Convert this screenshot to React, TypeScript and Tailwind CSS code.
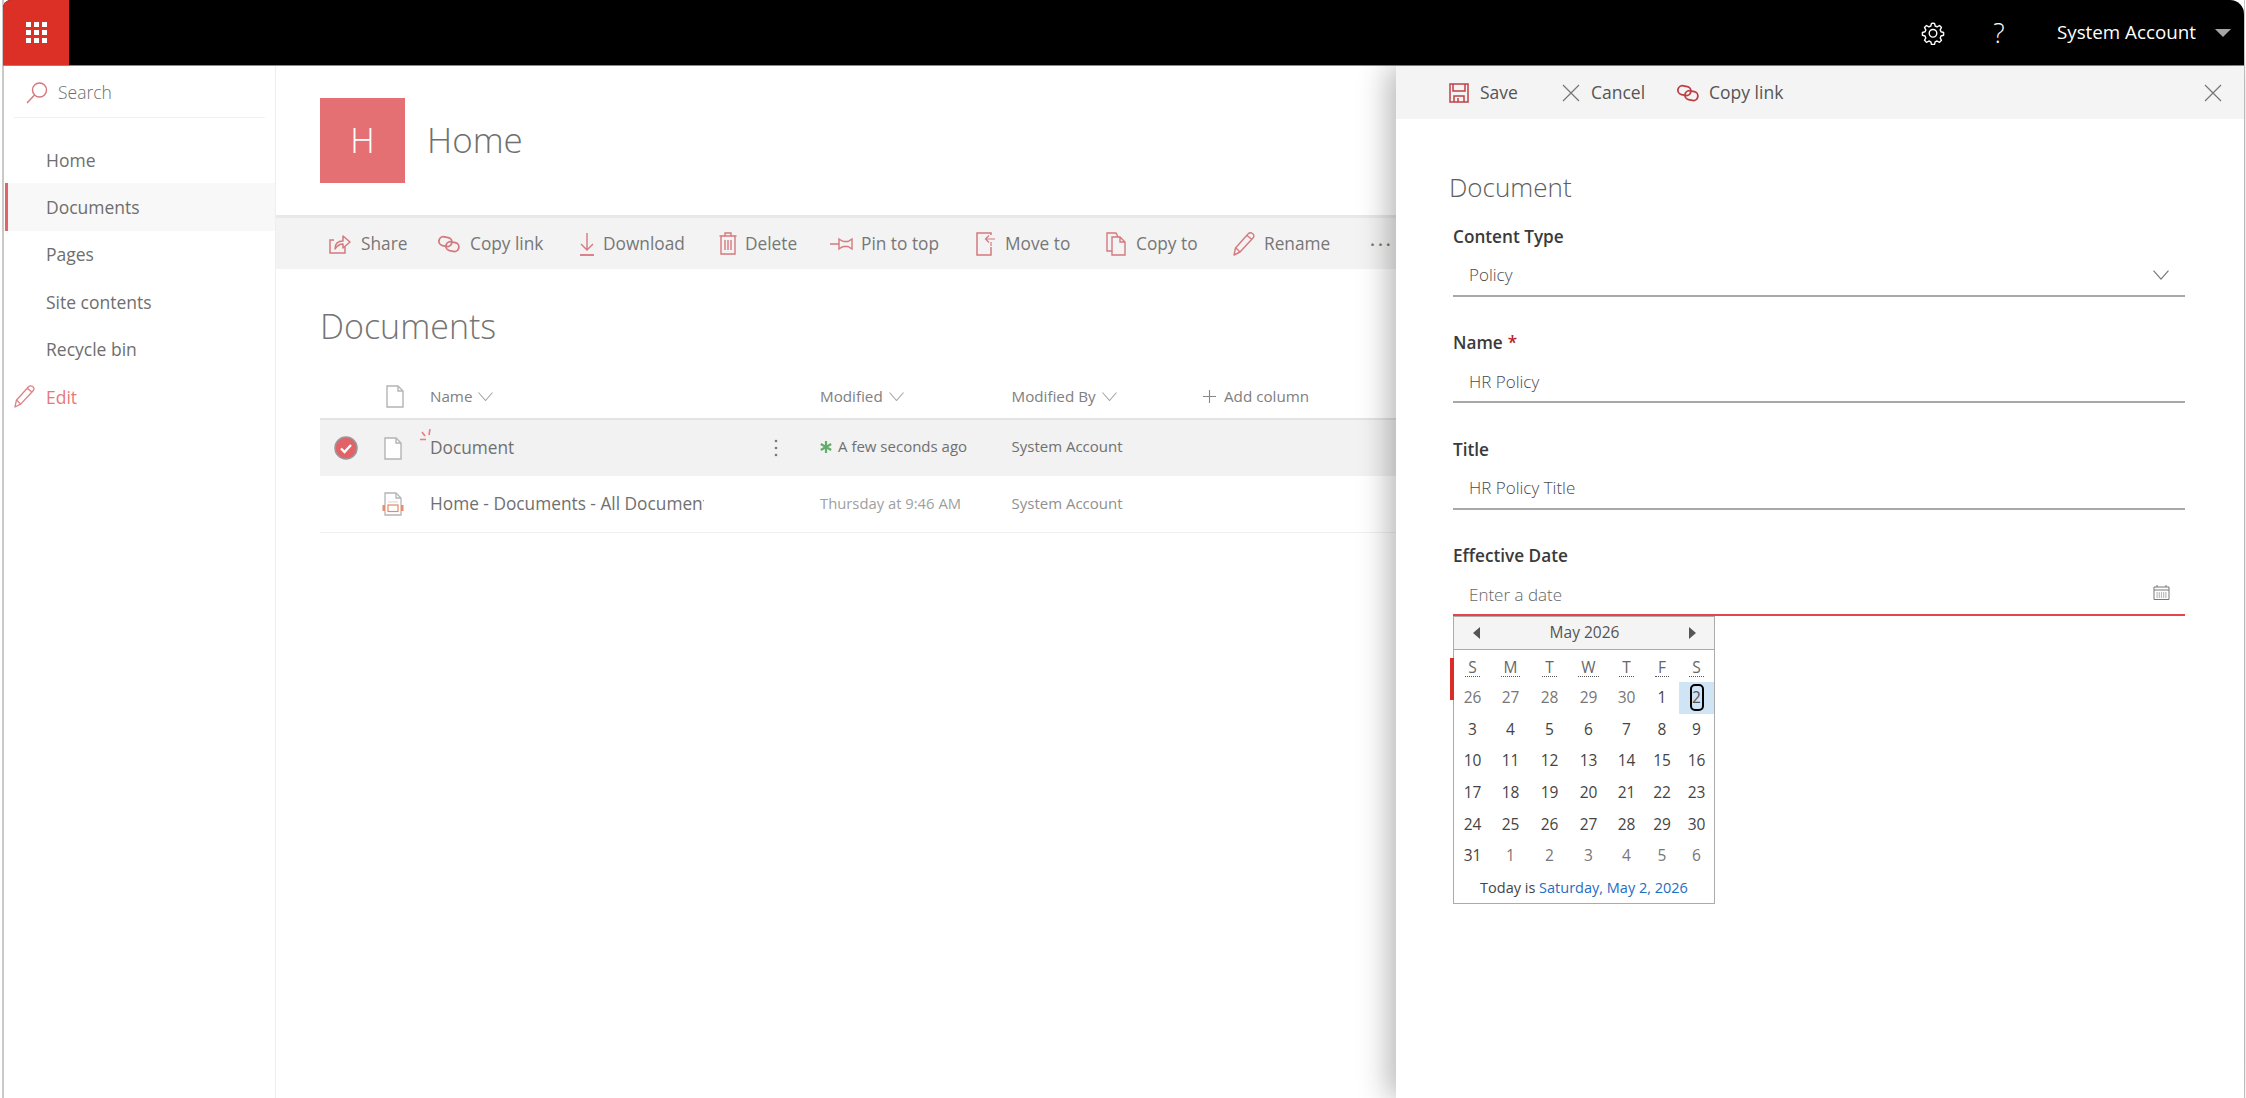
import React from "react";

const P = "#d4797e";

function Waffle() {
  const c = [0, 8, 16];
  return (
    <svg width="21" height="21" viewBox="0 0 21 21" fill="#fff">
      {c.map((y) => c.map((x) => <rect key={`${x}-${y}`} x={x} y={y} width="5" height="5" />))}
    </svg>
  );
}
function Gear() {
  return (
    <svg width="24" height="24" viewBox="0 0 24 24" fill="none" stroke="#fff" strokeWidth="1.4" strokeLinejoin="round">
      <path d="M12 2.2l1.5 0.2 0.7 2.6 1.9 0.8 2.4-1.3 2 2-1.3 2.4 0.8 1.9 2.6 0.7v2.8l-2.6 0.7-0.8 1.9 1.3 2.4-2 2-2.4-1.3-1.9 0.8-0.7 2.6h-3l-0.7-2.6-1.9-0.8-2.4 1.3-2-2 1.3-2.4-0.8-1.9-2.6-0.7v-2.8l2.6-0.7 0.8-1.9-1.3-2.4 2-2 2.4 1.3 1.9-0.8 0.7-2.6z" />
      <circle cx="12" cy="12.3" r="3.8" />
    </svg>
  );
}
function Share() {
  return (
    <svg width="22" height="20" viewBox="0 0 22 20" fill="none" stroke={P} strokeWidth="1.5">
      <path d="M5 6H1v13h15v-6" />
      <path d="M6 15c0-5 3-8 8-8V2l7 6-7 6v-4c-4 0-6 2-8 5z" strokeLinejoin="round" />
    </svg>
  );
}
function LinkIcon({ color = P }: { color?: string }) {
  return (
    <svg width="22" height="18" viewBox="0 0 22 18" fill="none" stroke={color} strokeWidth="1.8">
      <rect x="1" y="2" width="13" height="9" rx="4.5" transform="rotate(12 7 6)" />
      <rect x="8" y="7" width="13" height="9" rx="4.5" transform="rotate(12 14 11)" />
    </svg>
  );
}
function Download() {
  return (
    <svg width="16" height="24" viewBox="0 0 16 24" fill="none" stroke={P} strokeWidth="1.4">
      <path d="M8 1v17M2 12l6 6 6-6" />
      <path d="M1 23h14" strokeWidth="1.8" />
    </svg>
  );
}
function Trash() {
  return (
    <svg width="18" height="23" viewBox="0 0 18 23" fill="none" stroke={P} strokeWidth="1.4">
      <path d="M0.5 4h17M6 4V1h6v3M2 4v18h14V4" />
      <path d="M6 8v10M9 8v10M12 8v10" />
    </svg>
  );
}
function Pin() {
  return (
    <svg width="23" height="16" viewBox="0 0 23 16" fill="none" stroke={P} strokeWidth="1.4">
      <path d="M0 8h9M9 3c2 1.5 3 2.500 5 2.500h4l4-2.500v10l-4-2.500h-4c-2 0-3 1-5 2.500z" />
    </svg>
  );
}
function MoveTo() {
  return (
    <svg width="20" height="24" viewBox="0 0 20 24" fill="none" stroke={P} strokeWidth="1.5">
      <path d="M15 15v8H1V1h14v2" />
      <path d="M19 7h-9M13 3.500L9.500 7l3.500 3.500M15 10v4" strokeWidth="1.2" />
    </svg>
  );
}
function CopyTo() {
  return (
    <svg width="20" height="24" viewBox="0 0 20 24" fill="none" stroke={P} strokeWidth="1.4">
      <path d="M6 19H1V1h9l2 4" />
      <path d="M6 5h8l5 5v13H6zM14 5v5h5" />
    </svg>
  );
}
function Pencil({ color = P, w = 22 }: { color?: string; w?: number }) {
  return (
    <svg width={w} height={w + 2} viewBox="0 0 22 24" fill="none" stroke={color} strokeWidth="1.4" strokeLinejoin="round">
      <path d="M1 23l1.500-7L15 2c1.500-1.500 3-1.500 4.500-0.500s2 3 0.500 4.500L7 20z" />
      <path d="M3 16l4 4M14 3.500l5 4" />
    </svg>
  );
}
function Chevron({ color = "#a6a6a6", w = 15 }: { color?: string; w?: number }) {
  return (
    <svg width={w} height={(w * 9) / 15} viewBox="0 0 15 9" fill="none" stroke={color} strokeWidth="1.1">
      <path d="M0.500 0.500L7.500 8.500L14.500 0.500" />
    </svg>
  );
}
function DocIcon({ w = 18, h = 23 }: { w?: number; h?: number }) {
  return (
    <svg width={w} height={h} viewBox="0 0 18 23" fill="#fff" stroke="#b4b4b4" strokeWidth="1.4">
      <path d="M1 1h11l5 5v16H1z" />
      <path d="M12 1v5h5" fill="none" />
    </svg>
  );
}
function PdfIcon() {
  return (
    <svg width="22" height="24" viewBox="0 0 22 24" fill="none">
      <path d="M3 13V1h11l5 5v7M19 19v4H3v-4" stroke="#b4b4b4" strokeWidth="1.3" fill="#fff" />
      <path d="M14 1v5h5" stroke="#b4b4b4" strokeWidth="1.3" />
      <path d="M6 10h10" stroke="#dcdcdc" strokeWidth="1.2" />
      <rect x="6" y="13" width="10" height="6.500" stroke="#e28a6c" strokeWidth="1.2" fill="#fff" />
      <rect x="0.500" y="13" width="3" height="6" fill="#e0906f" />
      <rect x="18.500" y="13" width="3" height="6" fill="#e0906f" />
    </svg>
  );
}
function Save() {
  return (
    <svg width="20" height="20" viewBox="0 0 20 20" fill="none" stroke="#bd4046" strokeWidth="1.5">
      <path d="M1 1h18v18H1z" />
      <path d="M4 1v7h12V1M5 19v-6h10v6M9 15v4" />
    </svg>
  );
}
function XIcon({ size = 18, color = "#777" }: { size?: number; color?: string }) {
  return (
    <svg width={size} height={size} viewBox="0 0 18 18" fill="none" stroke={color} strokeWidth="1.2">
      <path d="M1 1l16 16M17 1L1 17" />
    </svg>
  );
}
function CalIcon() {
  return (
    <svg width="17" height="15" viewBox="0 0 17 15" fill="none" stroke="#777" strokeWidth="1">
      <path d="M1 2h15v12.500H1zM1 5h15M4 0v2M13 0v2" />
      <path d="M3.500 8h10M3.500 10h10M3.500 12h10" strokeDasharray="1.2 1" />
    </svg>
  );
}

const commands = [
  { label: "Share", icon: <Share />, cls: "w-[109px]", box: "w-[32px]" },
  { label: "Copy link", icon: <LinkIcon />, cls: "w-[141px]", box: "w-[32px]" },
  { label: "Download", icon: <Download />, cls: "w-[140px]", box: "w-[24px]" },
  { label: "Delete", icon: <Trash />, cls: "w-[111px]", box: "w-[26px]" },
  { label: "Pin to top", icon: <Pin />, cls: "w-[146px]", box: "w-[31px]" },
  { label: "Move to", icon: <MoveTo />, cls: "w-[130px]", box: "w-[29px]" },
  { label: "Copy to", icon: <CopyTo />, cls: "w-[127px]", box: "w-[30px]" },
  { label: "Rename", icon: <Pencil />, cls: "w-[137px]", box: "w-[31px]" },
];

const navItems = ["Home", "Documents", "Pages", "Site contents", "Recycle bin"];

const headers = ["S", "M", "T", "W", "T", "F", "S"];
const dayRows: [number, boolean][][] = [
  [[26, true], [27, true], [28, true], [29, true], [30, true], [1, false], [2, false]],
  [[3, false], [4, false], [5, false], [6, false], [7, false], [8, false], [9, false]],
  [[10, false], [11, false], [12, false], [13, false], [14, false], [15, false], [16, false]],
  [[17, false], [18, false], [19, false], [20, false], [21, false], [22, false], [23, false]],
  [[24, false], [25, false], [26, false], [27, false], [28, false], [29, false], [30, false]],
  [[31, false], [1, true], [2, true], [3, true], [4, true], [5, true], [6, true]],
];

function Field({ label, value, req }: { label: string; value: string; req?: boolean }) {
  return (
    <div className="mt-[33.5px]">
      <div className="h-[26px] flex items-center text-[17.2px] font-semibold text-[#3a3a3a]">
        {label}
        {req && <span className="ml-[5px] text-[#b3262c]">*</span>}
      </div>
      <div className="h-[47px] pt-[6px] pl-[16px] flex items-center border-b-2 border-[#a8a8a8] text-[17px] font-light text-[#4a4a4a]">
        {value}
      </div>
    </div>
  );
}

function Calendar() {
  const cols = "grid grid-cols-[37px_39px_39px_39px_37px_34px_35px]";
  return (
    <div className="absolute left-0 top-full w-[262px] h-[288px] bg-white border border-[#ababab] text-[15.5px] text-[#444]">
      <div className="absolute -left-[4px] top-[41px] w-[4px] h-[42px] bg-[#dc2c28]" />
      <div className="h-[33px] bg-[#f4f4f4] border-b border-[#ababab] flex items-center justify-between pl-[19px] pr-[18px]">
        <span className="w-0 h-0 border-y-[6px] border-y-transparent border-r-[7px] border-r-[#555]" />
        <span className="text-[15.5px] text-[#555]">May 2026</span>
        <span className="w-0 h-0 border-y-[6px] border-y-transparent border-l-[7px] border-l-[#555]" />
      </div>
      <div className={`${cols} h-[32px] pt-[3px] items-center text-center text-[#666]`}>
        {headers.map((h, i) => (
          <div key={i}>
            <span className="inline-block px-[3px] leading-[17px] border-b border-dotted border-[#555]">{h}</span>
          </div>
        ))}
      </div>
      {dayRows.map((row, r) => (
        <div key={r} className={`${cols} h-[31.6px]`}>
          {row.map(([d, muted], i) => (
            <div
              key={i}
              className={`flex items-center justify-center ${muted ? "text-[#777]" : "text-[#444]"} ${r === 0 && i === 6 ? "bg-[#cfe4f5]" : ""}`}
            >
              {r === 0 && i === 6 ? (
                <span className="flex items-center justify-center w-[14px] h-[27px] border-2 border-black rounded-[5px] text-[#555]">{d}</span>
              ) : (
                d
              )}
            </div>
          ))}
        </div>
      ))}
      <div className="h-[32px] flex items-center justify-center text-[14.5px]">
        <span>
          Today is <span className="text-[#1f6dc2]">Saturday, May 2, 2026</span>
        </span>
      </div>
    </div>
  );
}

export default function App() {
  return (
    <div className="relative w-[2246px] h-[1098px] bg-white overflow-hidden font-['Open_Sans','Noto_Sans',sans-serif] pl-[2px] pr-[1px]">
      <div className="relative h-full flex flex-col border-l-2 border-r border-[#c9c9c9]">
        <header className="h-[66px] shrink-0 flex items-stretch bg-black border-b border-[#8a8a8a] rounded-tl-[8px] rounded-tr-[14px] overflow-hidden -ml-[1px]">
          <div className="w-[66px] bg-[#dc3026] flex items-center justify-center">
            <Waffle />
          </div>
          <div className="flex-1" />
          <div className="flex items-center text-white pr-[13px]">
            <Gear />
            <span className="ml-[46px] w-[16px] text-center text-[27px] font-light leading-none">?</span>
            <span className="ml-[50px] text-[18.8px]">System Account</span>
            <span className="ml-[19px] w-0 h-0 border-x-[8px] border-x-transparent border-t-[8px] border-t-[#a6a6a6]" />
          </div>
        </header>
        <div className="flex flex-1 min-h-0">
          <nav className="w-[272px] shrink-0 border-r border-[#eeeeee] text-[17.5px] text-[#6e6e6e]">
            <div className="mx-[10px] h-[52px] pt-[2px] flex items-center border-b border-[#f0f0f0] pl-[12px]">
              <svg width="22" height="22" viewBox="0 0 22 22" fill="none" stroke="#d4797e" strokeWidth="1.4">
                <circle cx="13.5" cy="8" r="7" />
                <path d="M8.500 13L1 21" />
              </svg>
              <span className="ml-[10px] font-light">Search</span>
            </div>
            <div className="mt-[18px] ml-[1px]">
              {navItems.map((n) => (
                <div
                  key={n}
                  className={`h-[47.4px] flex items-center pl-[41px] ${n === "Documents" ? "bg-[#f8f8f8] border-l-[3px] border-[#e0646a] !pl-[38px]" : ""}`}
                >
                  {n}
                </div>
              ))}
              <div className="h-[47.4px] flex items-center pl-[9px] text-[#e8777a]">
                <Pencil color="#de8286" w={21} />
                <span className="ml-[11px]">Edit</span>
              </div>
            </div>
          </nav>
          <main className="flex-1 min-w-0 text-[#707070]">
            <div className="h-[149px] pl-[44px] pt-[32px] flex items-start">
              <div className="w-[85px] h-[85px] bg-[#e57074] flex items-center justify-center text-white text-[34px] font-light">H</div>
              <div className="ml-[22px] h-[85px] flex items-center text-[35px] font-light text-[#707070]">Home</div>
            </div>
            <div className="h-[54px] flex items-center bg-[#f3f3f3] border-t-[3px] border-[#e8e8e8] pl-[53px] text-[17.3px] text-[#777]">
              {commands.map((c) => (
                <div key={c.label} className={`flex items-center shrink-0 ${c.cls}`}>
                  <div className={`${c.box} flex items-center`}>{c.icon}</div>
                  <span>{c.label}</span>
                </div>
              ))}
              <span className="text-[18px] tracking-[3px] font-semibold text-[#777] leading-none">···</span>
            </div>
            <div className="pl-[44px]">
              <h1 className="h-[109px] flex items-center pt-[5px] text-[34px] font-light text-[#757575]">Documents</h1>
              <div className="h-[42px] pb-[3px] flex items-center border-b-2 border-[#e3e3e3] text-[15.2px] text-[#808080]">
                <div className="w-[66px]" />
                <div className="w-[44px]"><DocIcon /></div>
                <div className="w-[390px] flex items-center">Name<span className="ml-[6px]"><Chevron /></span></div>
                <div className="w-[191.5px] flex items-center">Modified<span className="ml-[6px]"><Chevron /></span></div>
                <div className="w-[191.5px] flex items-center">Modified By<span className="ml-[6px]"><Chevron /></span></div>
                <div className="flex items-center">
                  <svg width="13" height="13" viewBox="0 0 13 13" stroke="#888" strokeWidth="1.1"><path d="M6.500 0v13M0 6.500h13" /></svg>
                  <span className="ml-[8px]">Add column</span>
                </div>
              </div>
              <div className="h-[56px] flex items-center bg-[#f2f2f2] text-[15px]">
                <div className="w-[64px] pl-[14px]">
                  <svg width="24" height="24" viewBox="0 0 24 24">
                    <circle cx="12" cy="12" r="11" fill="#e16367" stroke="#999" strokeWidth="1.5" />
                    <path d="M7 12.500l3.500 3.500L17 9" fill="none" stroke="#fff" strokeWidth="2.4" />
                  </svg>
                </div>
                <div className="w-[46px]"><DocIcon /></div>
                <div className="relative w-[390px] flex items-center text-[17.3px] text-[#707070]">
                  <svg className="absolute -left-[10px] -top-[6px]" width="13" height="13" viewBox="0 0 13 13" fill="none" stroke="#ee7a7f" strokeWidth="1.6">
                    <path d="M0 10.500h6M5 7L2 3M9 6l1-6" />
                  </svg>
                  Document
                  <svg className="absolute left-[344px] top-[3px]" width="4" height="20" viewBox="0 0 4 20" fill="#777">
                    <circle cx="2" cy="3" r="1.3" /><circle cx="2" cy="10" r="1.3" /><circle cx="2" cy="17" r="1.3" />
                  </svg>
                </div>
                <div className="w-[191.5px] flex items-center pb-[3px]">
                  <svg width="12" height="12" viewBox="0 0 12 12" stroke="#62ad6a" strokeWidth="2.2"><path d="M6 0v12M0.800 3l10.400 6M11.200 3L0.800 9" /></svg>
                  <span className="ml-[6px]">A few seconds ago</span>
                </div>
                <div className="pb-[3px]">System Account</div>
              </div>
              <div className="h-[57px] flex items-center border-b border-[#f0f0f0]">
                <div className="w-[62px]" />
                <div className="w-[48px]"><PdfIcon /></div>
                <div className="w-[274px] overflow-hidden whitespace-nowrap text-[17.3px] text-[#707070]">Home - Documents - All Documents.pdf</div>
                <div className="w-[116px]" />
                <div className="w-[191.5px] pb-[2px] text-[14.8px] text-[#a0a0a0]">Thursday at 9:46 AM</div>
                <div className="pb-[2px] text-[15px] text-[#909090]">System Account</div>
              </div>
            </div>
          </main>
        </div>
        <aside className="absolute right-0 top-[66px] bottom-0 w-[848px] bg-white shadow-[-8px_0_28px_rgba(0,0,0,0.28)]">
          <div className="h-[53px] bg-[#f4f4f4] flex items-center pl-[53px] pr-[22px] text-[17.5px] text-[#555]">
            <div className="flex items-center w-[113px]">
              <Save />
              <span className="ml-[11px]">Save</span>
            </div>
            <div className="flex items-center w-[115px]">
              <XIcon />
              <span className="ml-[11px]">Cancel</span>
            </div>
            <div className="flex items-center flex-1">
              <LinkIcon color="#bd4046" />
              <span className="ml-[10px]">Copy link</span>
            </div>
            <XIcon />
          </div>
          <div className="pl-[57px] pr-[59px]">
            <h2 className="mt-[50px] h-[36px] -ml-[4px] flex items-center text-[26px] font-light text-[#5e5e5e]">Document</h2>
            <div className="-mt-[15px]">
              <div className="mt-[33.5px]">
                <div className="h-[26px] flex items-center text-[17.2px] font-semibold text-[#3a3a3a]">Content Type</div>
                <div className="h-[47px] pt-[6px] pl-[16px] pr-[16px] flex items-center justify-between border-b-2 border-[#a8a8a8] text-[17px] font-light text-[#4a4a4a]">
                  Policy
                  <Chevron color="#777" w={16} />
                </div>
              </div>
              <Field label="Name" value="HR Policy" req />
              <Field label="Title" value="HR Policy Title" />
              <div className="mt-[33.5px] relative">
                <div className="h-[26px] flex items-center text-[17.2px] font-semibold text-[#3a3a3a]">Effective Date</div>
                <div className="h-[47px] pt-[7px] pl-[16px] pr-[15px] flex items-center justify-between border-b-2 border-[#e4444a] text-[17px] font-light text-[#666]">
                  Enter a date
                  <span className="-mt-[6px]"><CalIcon /></span>
                </div>
                <Calendar />
              </div>
            </div>
          </div>
        </aside>
      </div>
    </div>
  );
}
